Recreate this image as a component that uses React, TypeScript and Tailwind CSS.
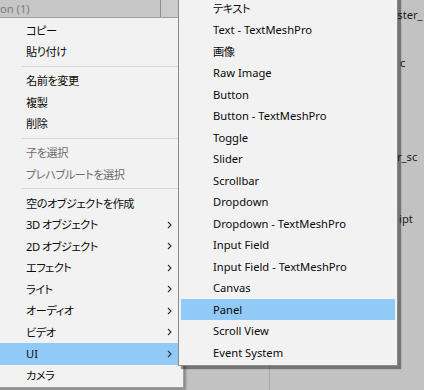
import { Fragment } from 'react';

type Item = { label: string; sub?: boolean; disabled?: boolean; active?: boolean } | 'sep';

const mainItems: Item[] = [
  { label: 'コピー' },
  { label: '貼り付け' },
  'sep',
  { label: '名前を変更' },
  { label: '複製' },
  { label: '削除' },
  'sep',
  { label: '子を選択', disabled: true },
  { label: 'プレハブルートを選択', disabled: true },
  'sep',
  { label: '空のオブジェクトを作成' },
  { label: '3D オブジェクト', sub: true },
  { label: '2D オブジェクト', sub: true },
  { label: 'エフェクト', sub: true },
  { label: 'ライト', sub: true },
  { label: 'オーディオ', sub: true },
  { label: 'ビデオ', sub: true },
  { label: 'UI', sub: true, active: true },
  { label: 'カメラ' },
];

const uiItems = [
  'テキスト',
  'Text - TextMeshPro',
  '画像',
  'Raw Image',
  'Button',
  'Button - TextMeshPro',
  'Toggle',
  'Slider',
  'Scrollbar',
  'Dropdown',
  'Dropdown - TextMeshPro',
  'Input Field',
  'Input Field - TextMeshPro',
  'Canvas',
  'Panel',
  'Scroll View',
  'Event System',
];

function Chevron() {
  return (
    <svg width="5" height="8" viewBox="0 0 5 8" className="ml-auto mr-[9px] shrink-0">
      <path d="M1 1l3 3-3 3" fill="none" stroke="#333" strokeWidth="1.1" />
    </svg>
  );
}

function MenuRow({ label, sub, disabled, active }: { label: string; sub?: boolean; disabled?: boolean; active?: boolean }) {
  // japanese labels get tighter spacing, the UI font is narrower than Noto CJK
  const jp = /[^\x00-\x7F]/.test(label);
  return (
    <div
      className={`mx-[2px] h-[21.5px] flex items-center pl-[32px] text-[11.2px] leading-none whitespace-nowrap ${
        active ? 'bg-[#91c9f7]' : ''
      } ${disabled ? 'text-[#6d6d6d]' : 'text-[#0a0a0a]'}`}
    >
      <span className={jp ? 'tracking-[-0.5px]' : ''}>{label}</span>
      {sub && <Chevron />}
    </div>
  );
}

export default function App() {
  return (
    <div
      className="relative w-[424px] h-[390px] overflow-hidden bg-[#c2c2c2] [font-family:'Noto_Sans','Noto_Sans_CJK_JP',sans-serif] [font-feature-settings:'palt']"
    >
      {/* background editor panels */}
      <div className="flex h-[17px]">
        <div className="w-[160px] bg-[#c6c6c6] text-[#7b7b7b] text-[11.2px] leading-[17px] whitespace-nowrap">on (1)</div>
        <div className="w-px bg-[#8e8e8e]" />
        <div className="w-[18px] bg-[#cccccc]" />
      </div>
      <div className="absolute left-[269px] top-0 bottom-0 w-px bg-[#a9a9a9]" />
      <div className="absolute left-[391px] top-0 flex flex-col text-[11.2px] leading-[16px] text-[#1c1c1c] whitespace-nowrap">
        <div className="mt-[7px]">aster_</div>
        <div className="mt-[32px] pl-[9px]">c</div>
        <div className="mt-[78px] pl-[6px]">r_sc</div>
        <div className="mt-[46px] pl-[8px]">ipt</div>
      </div>

      {/* context menu */}
      <div className="absolute left-[-9px] top-[17px] w-[193px] h-[371px] bg-[#f2f2f2] border border-[#a0a0a0] pt-[1.5px] shadow-[2px_2px_2px_rgba(0,0,0,0.3)]">
        {mainItems.map((it, i) =>
          it === 'sep' ? (
            <div key={i} className="h-[7.5px] flex items-center pl-[29px]">
              <div className="h-px w-full bg-[#d7d7d7]" />
            </div>
          ) : (
            <Fragment key={i}>
              <MenuRow {...it} />
            </Fragment>
          )
        )}
      </div>

      {/* UI submenu */}
      <div className="absolute left-[178px] top-[-4.5px] w-[220px] bg-[#f2f2f2] border border-[#8a8a8a] pt-[1px] pb-[2px] shadow-[3px_3px_1px_rgba(0,0,0,0.4)]">
        {uiItems.map((label) => (
          <MenuRow key={label} label={label} active={label === 'Panel'} />
        ))}
      </div>
    </div>
  );
}
